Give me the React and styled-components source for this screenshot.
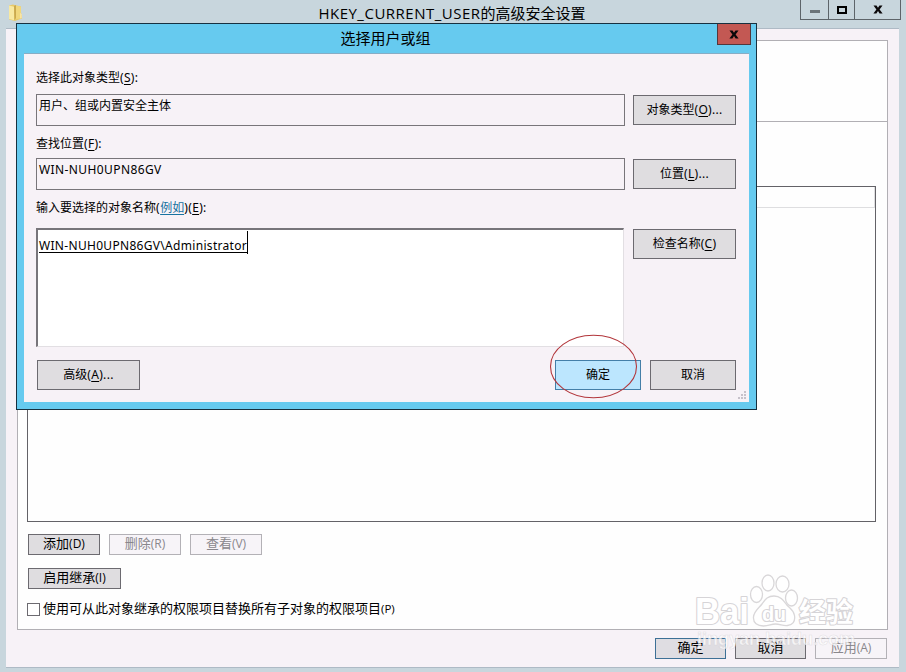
import React from "react";
import styled, { createGlobalStyle } from "styled-components";

const GlobalStyle = createGlobalStyle`
  * { box-sizing: border-box; }
  body { margin: 0; overflow: hidden; }
`;

const uiFont = `"Open Sans", "Noto Sans CJK SC", sans-serif`;
const formFont = `"Noto Sans", "Noto Sans CJK SC", sans-serif`;

const Window = styled.div`
  position: relative;
  display: flex;
  flex-direction: column;
  width: 906px;
  height: 672px;
  padding: 0 7px 4px 6px;
  overflow: hidden;
  background: #c8d6dd;
  color: #000;
  font-family: ${uiFont};
  font-size: 13px;
`;

const TitleBar = styled.header`
  display: grid;
  grid-template-columns: 120px 1fr 120px;
  flex: none;
  height: 28px;
  padding-left: 2px;
`;

const FolderIcon = styled.svg`
  display: block;
  width: 15px;
  height: 18px;
  margin-top: 4px;
`;

const WindowTitle = styled.h1`
  margin: 0;
  padding-right: 3px;
  text-align: center;
  font-size: 15px;
  font-weight: 400;
  line-height: 26px;
  white-space: nowrap;
`;

const Latin = styled.span`
  letter-spacing: ${(p) => p.$track || "0"};
  font-size: ${(p) => p.$size || "inherit"};
`;

const Controls = styled.div`
  display: flex;
  justify-self: end;
  width: 101px;
  height: 20px;
  margin-right: -2px;
  border: 1px solid #5d6469;
  border-top: 0;
`;

const Control = styled.button`
  display: flex;
  align-items: center;
  justify-content: center;
  width: ${(p) => p.$w}px;
  height: 19px;
  padding: ${(p) => p.$drop || 0}px 0 0;
  border: 0;
  border-right: ${(p) => (p.$last ? "0" : "1px solid #5d6469")};
  background: transparent;
`;

const Client = styled.main`
  display: flex;
  flex-direction: column;
  flex: 1;
  padding: 11px 11px 0;
  border-top: 1px solid #aebac5;
  border-bottom: 1px solid #aebac5;
  background: #f7f2f7;
`;

const Panel = styled.section`
  display: flex;
  flex-direction: column;
  height: 590px;
  border: 1px solid #b1afb4;
  background: #fefefe;
`;

const PanelHead = styled.div`
  height: 81px;
  border-bottom: 1px solid #b1afb4;
`;

const PanelBody = styled.div`
  display: flex;
  flex-direction: column;
  padding: 64px 11px 0 9px;
`;

const ListBox = styled.div`
  height: 336px;
  border: 1px solid #636267;
`;

const ListHeader = styled.div`
  height: 21px;
  border-right: 1px solid #dedee0;
  border-bottom: 1px solid #dedee0;
`;

const ButtonRow = styled.div`
  display: flex;
  gap: 9px;
  margin: ${(p) => p.$m || "0"};
`;

const tones = {
  normal: ["#dfdde0", "#6c6a70", "#000"],
  disabled: ["#f7f4f8", "#b3b1b6", "#89878c"],
  primary: ["#dfdde2", "#3d7096", "#000"],
  active: ["#bce6fe", "#447fa8", "#000"],
};

const Button = styled.button`
  display: flex;
  flex: none;
  align-items: center;
  justify-content: center;
  width: ${(p) => p.$w}px;
  height: ${(p) => p.$h || 21}px;
  padding: 0 0 ${(p) => (p.$h ? 1 : 2)}px 0;
  border: 1px solid ${(p) => tones[p.$tone || "normal"][1]};
  background: ${(p) => tones[p.$tone || "normal"][0]};
  color: ${(p) => tones[p.$tone || "normal"][2]};
  font-family: inherit;
  font-size: inherit;
  line-height: 17px;
  white-space: nowrap;
`;

const Check = styled.label`
  display: flex;
  align-items: center;
  gap: 3px;
  height: 18px;
  margin-top: 11px;
  white-space: nowrap;
`;

const CheckText = styled.span`
  padding-bottom: 3px;
`;

const Box = styled.span`
  width: 13px;
  height: 13px;
  border: 1px solid #6c6a70;
  background: #fff;
`;

const Footer = styled.footer`
  display: flex;
  justify-content: flex-end;
  gap: 9px;
  padding: 8px 1px 0 0;
`;

const Dialog = styled.section`
  position: absolute;
  left: 16px;
  top: 23px;
  display: flex;
  flex-direction: column;
  width: 741px;
  height: 387px;
  padding: 0 7px 7px;
  border: 1px solid #17303f;
  background: #66caef;
  font-family: ${formFont};
  font-size: 12px;
`;

const DialogBar = styled.header`
  display: grid;
  grid-template-columns: 30px 1fr 34px;
  flex: none;
  height: 29px;
  margin-right: -2px;
`;

const DialogTitle = styled.h2`
  margin: 0;
  text-align: center;
  font-size: 15px;
  font-weight: 400;
  line-height: 28px;
`;

const CloseButton = styled.button`
  display: flex;
  align-items: center;
  justify-content: center;
  width: 34px;
  height: 21px;
  padding: 0;
  border: 1px solid #54363b;
  border-top: 0;
  background: #c35853;
`;

const DialogBody = styled.div`
  position: relative;
  flex: 1;
  padding: 0 13px 0 12px;
  border-top: 1px solid #87adc5;
  background: #f7f2f7;
`;

const Fields = styled.div`
  display: grid;
  grid-template-columns: 589px 103px;
  column-gap: 8px;
  grid-template-rows: 40px 32px 32px 32px 38px 119px;
`;

const Caption = styled.div`
  grid-column: 1 / -1;
  align-self: end;
  height: ${(p) => p.$h}px;
  line-height: 18px;
  white-space: nowrap;
`;

const ReadOnly = styled.div`
  padding: 2px 2px;
  border: 1px solid #78757a;
  line-height: 18px;
`;

const Cell = styled.div`
  padding-top: 1px;
`;

const TextArea = styled.div`
  width: 588px;
  height: 119px;
  padding: 0 1px;
  border: 1px solid #e2dfe3;
  border-top: 2px solid #77757a;
  border-left: 2px solid #77757a;
  background: #fff;
`;

const Entry = styled.span`
  display: inline-block;
  height: 23px;
  margin-top: 1px;
  border-right: 1px solid #000;
  line-height: 30px;
  text-decoration: underline;
  text-underline-offset: 2px;
  letter-spacing: 0.31px;
`;

const Link = styled.a`
  color: #1873a0;
  text-decoration: underline;
  text-underline-offset: 2px;
`;

const Key = styled.u`
  text-underline-offset: 2px;
`;

const DialogActions = styled.div`
  display: grid;
  grid-template-columns: 103px 1fr 86px 86px;
  column-gap: 9px;
  padding: 13px 0 0 1px;

  button:nth-of-type(2) { grid-column: 3; }
`;

const Grip = styled.svg`
  position: absolute;
  right: 2px;
  bottom: 1px;
  width: 10px;
  height: 10px;
`;

const Marker = styled.svg`
  position: absolute;
  left: 549px;
  top: 333px;
  width: 90px;
  height: 67px;
  pointer-events: none;
`;

const Watermark = styled.svg`
  position: absolute;
  left: 690px;
  top: 570px;
  width: 172px;
  height: 84px;
  pointer-events: none;
`;

const CloseGlyph = () => (
  <svg width="10" height="9" viewBox="0 0 10 9">
    <path d="M0.5 0.5h3l1.5 2.2L6.5.5h3L6.6 4.4l3 4.1h-3L5 6.1 3.4 8.500h-3l3-4.100z" fill="#0b080a" />
  </svg>
);

const Accel = ({ k, dots }) => (
  <Latin $track="0.3px">
    (<Key>{k}</Key>){dots}
  </Latin>
);

const Paw = () => (
  <Watermark viewBox="0 0 172 84">
    <g fill="#fff" fillOpacity="0.75" stroke="#d9d7d9" strokeWidth="1.3">
      <ellipse cx="66.500" cy="24.500" rx="6" ry="8" />
      <ellipse cx="78" cy="13" rx="6" ry="8" />
      <ellipse cx="92.500" cy="14" rx="6.500" ry="8" />
      <ellipse cx="101.500" cy="28" rx="6" ry="8" />
      <path d="M84 26c-7 0-9 4-12 8s-8 7-8.500 13 4 9 10 9 7-2 12-2 7 2 12 1.500 8-4 7-10-5-7-8-11-6-8.500-12.500-8.500z" />
    </g>
    <g fill="#fff" stroke="#d6d4d7" strokeWidth="2.2" strokeLinejoin="round" paintOrder="stroke" fontWeight="700">
      <text x="5" y="54" fontFamily="Liberation Sans" fontSize="36" textLength="54" lengthAdjust="spacingAndGlyphs">Bai</text>
      <text x="72" y="51" fontFamily="Liberation Sans" fontSize="20" textLength="24">du</text>
      <text x="109" y="52" fontFamily="Noto Sans CJK SC" fontSize="27" textLength="54">经验</text>
    </g>
    <text x="7" y="75" fontFamily="Liberation Sans" fontSize="18" fontWeight="700" textLength="158" lengthAdjust="spacingAndGlyphs" fill="#fff" fillOpacity="0.7" stroke="#ccc9ce" strokeOpacity="0.5" strokeWidth="0.6">jingyan.baidu.com</text>
  </Watermark>
);

export default function App() {
  return (
    <>
      <GlobalStyle />
      <Window>
        <TitleBar>
          <FolderIcon viewBox="0 0 15 18">
            <path d="M1 1.500L5 .5l3 1 5 1v6l1 3v3l-3 1-4 1.500-6-1.500z" fill="#e8ca69" />
            <path d="M1 1.500l5 1.200v13.500l-5-1.200z" fill="#f8e9a2" />
            <path d="M6 2l2-1v13l-1.500 2z" fill="#c9a94f" />
            <path d="M8 1.500l5 1v12L8 15z" fill="#f0d77c" />
            <path d="M12.500 9l1 1v4l-1 .5z" fill="#fff2cb" />
          </FolderIcon>
          <WindowTitle>
            <Latin $track="0.5px">HKEY_CURRENT_USER</Latin>的高级安全设置
          </WindowTitle>
          <Controls>
            <Control $w={28} $drop={4} aria-label="最小化">
              <svg width="10" height="3"><rect width="10" height="3" y="0" fill="#6b7479" /></svg>
            </Control>
            <Control $w={26} aria-label="最大化">
              <svg width="10" height="8"><rect x="1" y="1" width="8" height="6" fill="none" stroke="#000" strokeWidth="2" /></svg>
            </Control>
            <Control $w={45} $last aria-label="关闭"><CloseGlyph /></Control>
          </Controls>
        </TitleBar>
        <Client>
          <Panel>
            <PanelHead />
            <PanelBody>
              <ListBox><ListHeader /></ListBox>
              <ButtonRow $m="12px 0 0 1px">
                <Button $w={72}>添加<Latin $size="12px">(D)</Latin></Button>
                <Button $w={72} $tone="disabled">删除<Latin $size="12px">(R)</Latin></Button>
                <Button $w={72} $tone="disabled">查看<Latin $size="12px">(V)</Latin></Button>
              </ButtonRow>
              <ButtonRow $m="13px 0 0 1px">
                <Button $w={93}>启用继承<Latin $size="12px">(I)</Latin></Button>
              </ButtonRow>
              <Check>
                <Box />
                <CheckText>使用可从此对象继承的权限项目替换所有子对象的权限项目<Latin $size="11.5px">(P)</Latin></CheckText>
              </Check>
            </PanelBody>
          </Panel>
          <Footer>
            <Button $w={71} $tone="primary">确定</Button>
            <Button $w={71}>取消</Button>
            <Button $w={72} $tone="disabled">应用<Latin $size="12px">(A)</Latin></Button>
          </Footer>
        </Client>

        <Dialog>
          <DialogBar>
            <span />
            <DialogTitle>选择用户或组</DialogTitle>
            <CloseButton aria-label="关闭"><CloseGlyph /></CloseButton>
          </DialogBar>
          <DialogBody>
            <Fields>
              <Caption $h={25}>选择此对象类型<Accel k="S" dots=":" /></Caption>
              <ReadOnly>用户、组或内置安全主体</ReadOnly>
              <Cell><Button $w={103} $h={30}>对象类型<Accel k="O" dots="..." /></Button></Cell>
              <Caption $h={23}>查找位置<Accel k="F" dots=":" /></Caption>
              <ReadOnly><Latin $track="0.4px">WIN-NUH0UPN86GV</Latin></ReadOnly>
              <Cell><Button $w={103} $h={30}>位置<Accel k="L" dots="..." /></Button></Cell>
              <Caption $h={29}>输入要选择的对象名称<Latin $track="0.5px">(</Latin><Link>例如</Link><Latin $track="0.5px">)</Latin><Accel k="E" dots=":" /></Caption>
              <TextArea><Entry>WIN-NUH0UPN86GV\Administrator</Entry></TextArea>
              <Cell><Button $w={103} $h={30}>检查名称<Accel k="C" /></Button></Cell>
            </Fields>
            <DialogActions>
              <Button $w={103} $h={30}>高级<Accel k="A" dots="..." /></Button>
              <Button $w={86} $h={30} $tone="active">确定</Button>
              <Button $w={86} $h={30}>取消</Button>
            </DialogActions>
            <Grip viewBox="0 0 10 10" fill="#c6c1ca">
              <path d="M7 0h2v2H7zM7 3h2v2H7zM4 3h2v2H4zM7 6h2v2H7zM4 6h2v2H4zM1 6h2v2H1z" />
            </Grip>
          </DialogBody>
        </Dialog>
        <Marker viewBox="0 0 90 67">
          <ellipse cx="44.500" cy="33.500" rx="43" ry="31.300" fill="none" stroke="#b2363b" strokeWidth="1.100" />
        </Marker>
        <Paw />
      </Window>
    </>
  );
}
